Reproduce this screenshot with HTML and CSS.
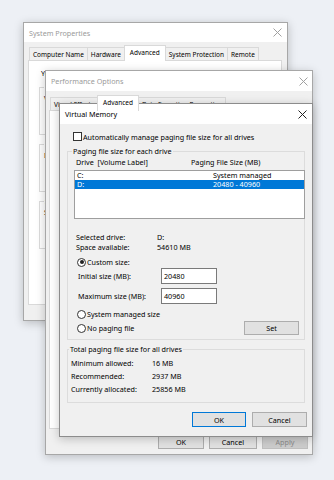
FILE: index.html
```html
<!DOCTYPE html>
<html lang="en">
<head>
    <meta charset="UTF-8">
    <title>Virtual Memory</title>
    <link rel="stylesheet" href="styles.css">
</head>
<body>
    <div class="desk">
        <!-- System Properties (back) -->
        <div class="win sysprops">
            <div class="titlebar">
                <span class="title">System Properties</span>
                <svg class="close" width="9" height="9" viewBox="0 0 9 9"><path d="M0.5 0.5L8.5 8.5M8.5 0.5L0.5 8.5"/></svg>
            </div>
            <div class="tabs">
                <span class="tab">Computer Name</span>
                <span class="tab">Hardware</span>
                <span class="tab on">Advanced</span>
                <span class="tab">System Protection</span>
                <span class="tab">Remote</span>
            </div>
            <div class="panel sp-panel">
                <p class="note">You must be logged on as an Administrator to make most of these changes.</p>
                <fieldset class="grp sp-grp">
                    <legend>Performance</legend>
                    <p>Visual effects, processor scheduling, memory usage, and virtual memory</p>
                </fieldset>
                <fieldset class="grp sp-grp">
                    <legend>User Profiles</legend>
                    <p>Desktop settings related to your sign-in</p>
                </fieldset>
                <fieldset class="grp sp-grp">
                    <legend>Startup and Recovery</legend>
                    <p>System startup, system failure, and debugging information</p>
                </fieldset>
            </div>
        </div>

        <!-- Performance Options (middle) -->
        <div class="win perf">
            <div class="titlebar">
                <span class="title">Performance Options</span>
                <svg class="close" width="9" height="9" viewBox="0 0 9 9"><path d="M0.5 0.5L8.5 8.5M8.5 0.5L0.5 8.5"/></svg>
            </div>
            <div class="tabs">
                <span class="tab">Visual Effects</span>
                <span class="tab on">Advanced</span>
                <span class="tab">Data Execution Prevention</span>
            </div>
            <div class="panel perf-panel"></div>
            <div class="actions perf-actions">
                <button class="btn">OK</button>
                <button class="btn">Cancel</button>
                <button class="btn disabled">Apply</button>
            </div>
        </div>

        <!-- Virtual Memory (front) -->
        <div class="win vm active">
            <div class="titlebar">
                <span class="title">Virtual Memory</span>
                <svg class="close" width="9" height="9" viewBox="0 0 9 9"><path d="M0.5 0.5L8.5 8.5M8.5 0.5L0.5 8.5"/></svg>
            </div>
            <div class="vm-body">
                <div class="check"><span class="box"></span>Automatically manage paging file size for all drives</div>

                <fieldset class="grp paging">
                    <legend>Paging file size for each drive</legend>
                    <div class="head"><span>Drive&nbsp; [Volume Label]</span><span>Paging File Size (MB)</span></div>
                    <div class="listbox">
                        <div class="item"><span>C:</span><span>System managed</span></div>
                        <div class="item sel"><span>D:</span><span>20480 - 40960</span></div>
                    </div>
                    <div class="info first"><span>Selected drive:</span><span>D:</span></div>
                    <div class="info"><span>Space available:</span><span>54610 MB</span></div>
                    <div class="radio custom"><span class="dot on"></span>Custom size:</div>
                    <div class="field"><span>Initial size (MB):</span><span class="input">20480</span></div>
                    <div class="field max"><span>Maximum size (MB):</span><span class="input">40960</span></div>
                    <div class="radio managed"><span class="dot"></span>System managed size</div>
                    <div class="radio-row">
                        <div class="radio"><span class="dot"></span>No paging file</div>
                        <button class="btn set">Set</button>
                    </div>
                </fieldset>

                <fieldset class="grp total">
                    <legend>Total paging file size for all drives</legend>
                    <div class="stat"><span>Minimum allowed:</span><span>16 MB</span></div>
                    <div class="stat"><span>Recommended:</span><span>2937 MB</span></div>
                    <div class="stat"><span>Currently allocated:</span><span>25856 MB</span></div>
                </fieldset>

                <div class="actions vm-actions">
                    <button class="btn default">OK</button>
                    <button class="btn">Cancel</button>
                </div>
            </div>
        </div>
    </div>
</body>
</html>
```

FILE: styles.css
```css
* {
    box-sizing: border-box;
}

body {
    margin: 0;
    background: #edf0f5;
    color: #000;
    font-family: 'Noto Sans', sans-serif;
    font-size: 7.2px;
    line-height: 10px;
}

.desk {
    position: relative;
    width: 334px;
    height: 480px;
    overflow: hidden;
}

/* Windows */
.win {
    position: absolute;
    display: flex;
    flex-direction: column;
    background: #f0f0f0;
    border: 1px solid #a7a7a7;
    box-shadow: 0 2px 9px rgba(0, 0, 0, 0.22);
}

.sysprops { left: 23px; top: 22px; width: 265px; height: 299px; }
.perf { left: 45px; top: 70px; width: 268px; height: 385px; }
.vm { left: 59px; top: 103px; width: 254px; height: 334px; border-color: #8c8c8c; }

.titlebar {
    display: flex;
    align-items: center;
    justify-content: space-between;
    height: 19px;
    padding: 0 5px;
    background: #fff;
}

.perf .titlebar { height: 20px; padding-right: 4px; }
.vm .titlebar { height: 20px; }

.title {
    color: #9a9a9a;
}

.active .title { color: #000; }

.close path {
    stroke: #a0a0a0;
    stroke-width: 1;
    fill: none;
}

.active .close path { stroke: #222; }

/* Tabs */
.tabs {
    display: flex;
    align-items: flex-end;
    height: 16px;
    margin: 3px 0 0 5px;
    font-size: 6.5px;
    white-space: nowrap;
}

.perf .tabs { margin: 4px 0 0 4px; }

.tab {
    height: 14px;
    line-height: 13px;
    padding: 0 3px;
    margin-right: -1px;
    background: #f0f0f0;
    border: 1px solid #d9d9d9;
    border-bottom: none;
}

.tab.on {
    position: relative;
    height: 16px;
    padding: 0 5px;
    background: #fff;
    z-index: 1;
}

.panel {
    background: #fff;
    border: 1px solid #d9d9d9;
    margin-top: -1px;
}

.sp-panel {
    height: 245px;
    margin: -1px 5px 0 4px;
    padding: 8px 10px 0 10px;
    white-space: nowrap;
    overflow: hidden;
}

.note {
    margin: 0 0 0 2px;
    line-height: 9px;
}

.grp {
    margin: 0;
    padding: 0;
    border: 1px solid #dcdcdc;
    min-width: 0;
}

.grp legend {
    padding: 0 1px;
    line-height: 10px;
}

.sp-grp {
    margin-top: 4px;
    padding: 0 0 31px 4px;
}

.sp-grp p {
    margin: 1px 0 0 0;
}

.perf-panel {
    flex: 1;
    margin: -1px 4px 0 3px;
}

/* Buttons */
.actions {
    display: flex;
    justify-content: flex-end;
}

.btn {
    font: inherit;
    color: #000;
    padding: 0;
    background: #e1e1e1;
    border: 1px solid #adadad;
    line-height: 12px;
}

.btn.default {
    border-color: #0078d7;
}

.btn.disabled {
    background: #cccccc;
    border-color: #bfbfbf;
    color: #8a8a8a;
}

.perf-actions {
    gap: 5px;
    padding: 6px 4px 5px 0;
}

.perf-actions .btn {
    width: 46px;
    height: 14px;
}

.perf-actions .btn:nth-child(2) { width: 48px; }

/* Virtual Memory body */
.vm-body {
    padding: 0 7px;
    white-space: nowrap;
}

.check {
    display: flex;
    align-items: center;
    height: 11px;
    margin-top: 7px;
    padding-left: 6px;
}

.box {
    width: 9px;
    height: 9px;
    margin-right: 1px;
    background: #fff;
    border: 1px solid #333;
}

.paging {
    margin-top: 4px;
    padding: 0 0 4px 6px;
}

.grp.paging legend,
.grp.total legend {
    margin-left: -2px;
}

.head {
    display: grid;
    grid-template-columns: 115px 1fr;
    height: 10px;
    margin-top: 1px;
    padding-left: 2px;
}

.listbox {
    height: 49px;
    margin: 3px -1px 0 0;
    background: #fff;
    border: 1px solid #9e9e9e;
}

.item {
    display: grid;
    grid-template-columns: 136px 1fr;
    height: 9px;
    line-height: 9px;
    padding-left: 2px;
}

.item.sel {
    background: #0078d7;
    color: #fff;
}

.info {
    display: grid;
    grid-template-columns: 81px 1fr;
    height: 10px;
    padding-left: 2px;
}

.info.first { margin-top: 13px; }

.radio {
    display: flex;
    align-items: center;
    height: 10px;
    padding-left: 3px;
}

.radio.custom { margin-top: 5px; }
.radio.managed { margin-top: 5px; }

.dot {
    position: relative;
    width: 9px;
    height: 9px;
    margin-right: 1px;
    background: #fff;
    border: 1px solid #333;
    border-radius: 50%;
}

.dot.on::after {
    content: "";
    position: absolute;
    left: 1.5px;
    top: 1.5px;
    width: 4px;
    height: 4px;
    background: #222;
    border-radius: 50%;
}

.field {
    display: grid;
    grid-template-columns: 83px 56px;
    align-items: center;
    height: 16px;
    margin-top: 1px;
    padding-left: 4px;
}

.field.max { margin-top: 4px; }

.input {
    height: 16px;
    padding: 2px 0 0 2px;
    background: #fff;
    border: 1px solid #7a7a7a;
}

.radio-row {
    display: flex;
    align-items: center;
    justify-content: space-between;
    height: 14px;
    margin-top: 2px;
    padding-right: 5px;
}

.btn.set {
    width: 55px;
    height: 14px;
}

.total {
    margin-top: 4px;
    padding: 3px 0 6px 3px;
}

.stat {
    display: grid;
    grid-template-columns: 81px 1fr;
    height: 13px;
    line-height: 13px;
}

.vm-actions {
    gap: 6px;
    margin: 9px -2px 0 0;
}

.vm-actions .btn {
    width: 55px;
    height: 15px;
}

.vm-actions .btn.default { width: 54px; }
```
